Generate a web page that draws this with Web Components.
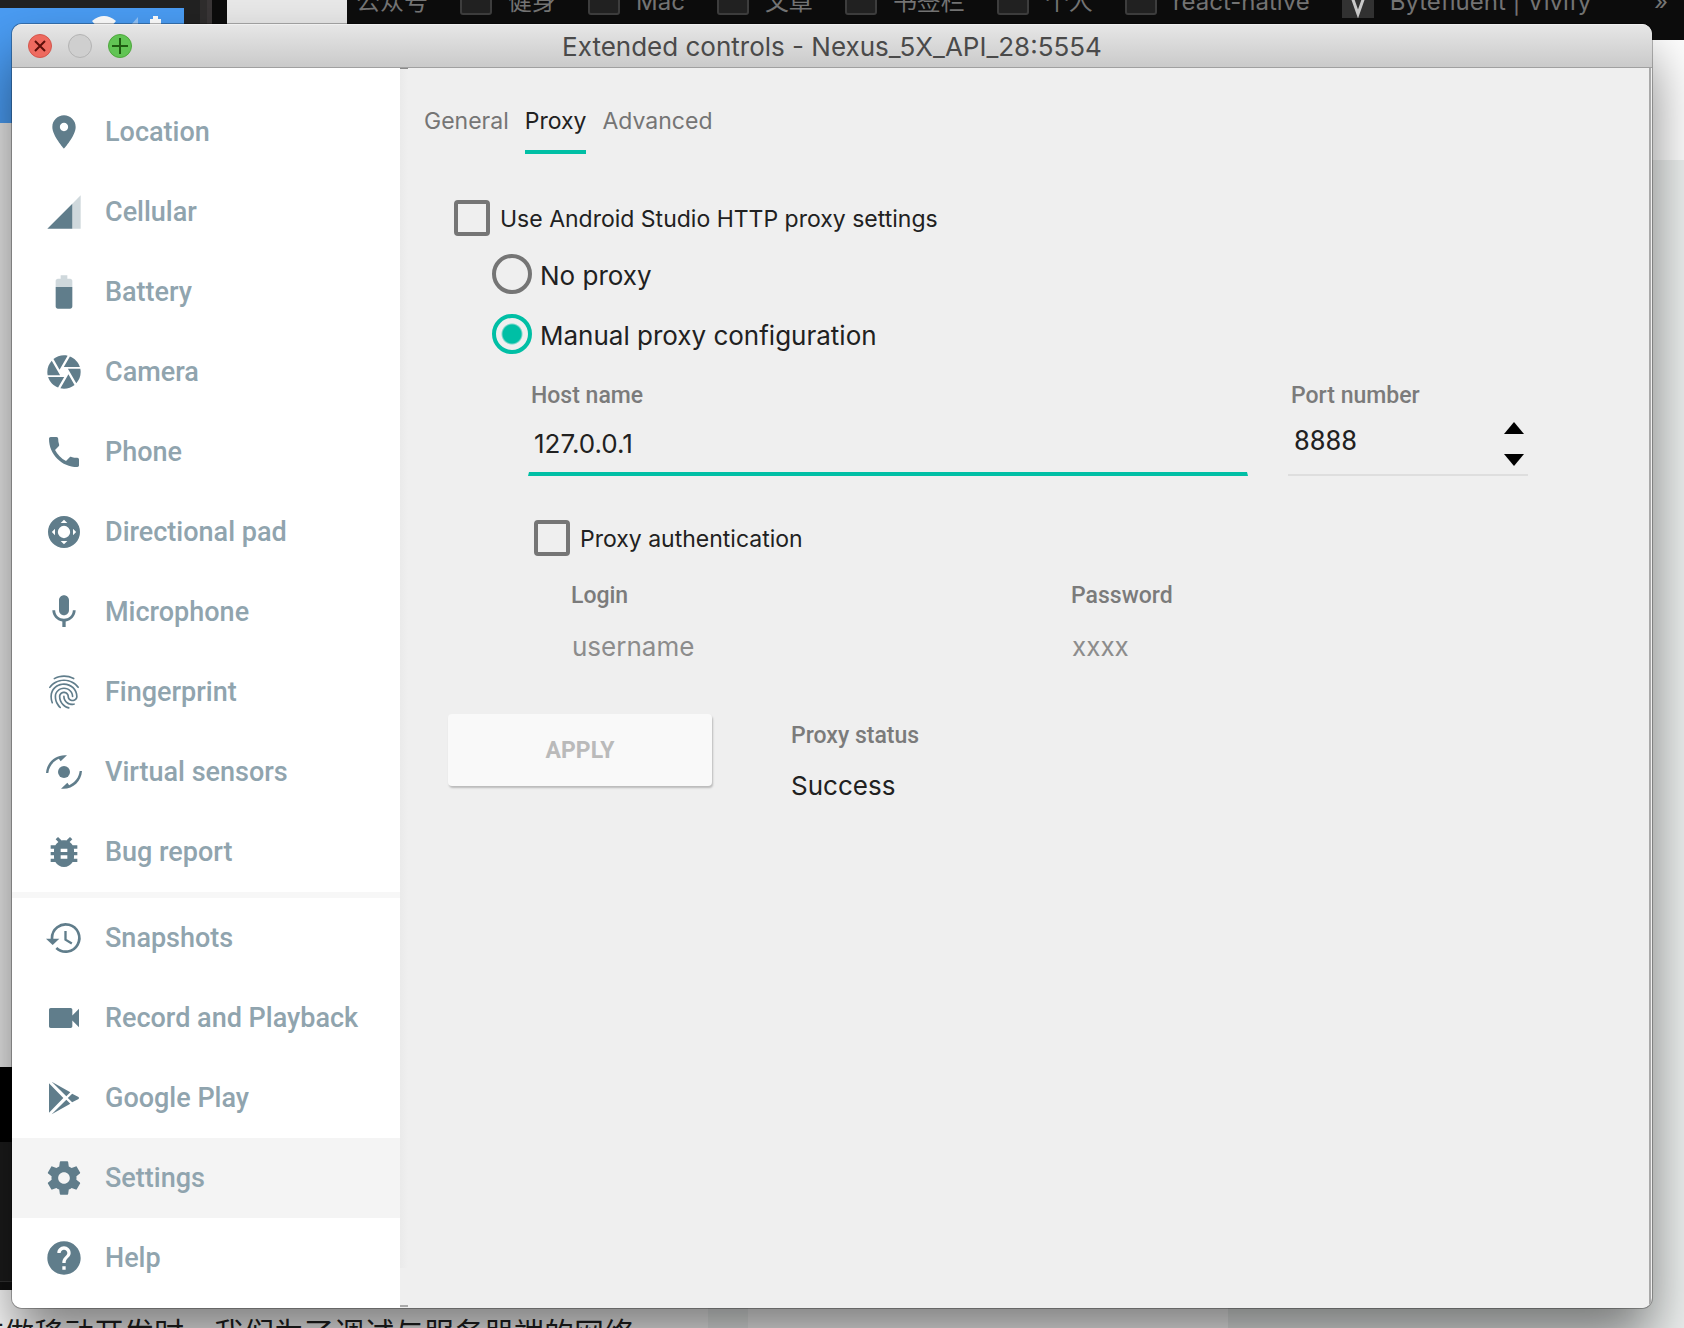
<!DOCTYPE html>
<html lang="en">
<head>
<meta charset="utf-8">
<title>Extended controls</title>
<style>
  html, body { margin: 0; height: 100%; }
  body { overflow: hidden; font-family: Inter, "Noto Sans CJK SC", sans-serif; color: #212121; }
</style>
</head>
<body>
<desktop-view>
  <browser-backdrop slot="back"></browser-backdrop>
  <phone-backdrop slot="back"></phone-backdrop>
  <app-window heading="Extended controls - Nexus_5X_API_28:5554">
    <side-bar slot="side">
      <side-item icon="location">Location</side-item>
      <side-item icon="cellular">Cellular</side-item>
      <side-item icon="battery">Battery</side-item>
      <side-item icon="camera">Camera</side-item>
      <side-item icon="phone">Phone</side-item>
      <side-item icon="dpad">Directional pad</side-item>
      <side-item icon="mic">Microphone</side-item>
      <side-item icon="finger">Fingerprint</side-item>
      <side-item icon="sensors">Virtual sensors</side-item>
      <side-item icon="bug">Bug report</side-item>
      <side-item icon="history" divided>Snapshots</side-item>
      <side-item icon="video">Record and Playback</side-item>
      <side-item icon="play">Google Play</side-item>
      <side-item icon="gear" selected>Settings</side-item>
      <side-item icon="help">Help</side-item>
    </side-bar>
    <tab-strip></tab-strip>
    <proxy-form></proxy-form>
  </app-window>
</desktop-view>

<script>
const define = (name, html, setup) => {
  const tpl = document.createElement('template');
  tpl.innerHTML = html;
  customElements.define(name, class extends HTMLElement {
    constructor() {
      super();
      this.attachShadow({ mode: 'open' }).append(tpl.content.cloneNode(true));
    }
    connectedCallback() { if (setup) setup(this, this.shadowRoot); }
  });
};

const ICONS = {
  location: '<path d="M12 2C8.13 2 5 5.13 5 9c0 5.25 7 13 7 13s7-7.75 7-13c0-3.87-3.13-7-7-7zm0 9.5c-1.38 0-2.5-1.12-2.5-2.5s1.12-2.5 2.5-2.5 2.5 1.12 2.5 2.5-1.12 2.5-2.5 2.5z"/>',
  cellular: '<path opacity=".3" d="M17 7l5-5v20h-5z"/><path d="M17 7L2 22h15z"/>',
  battery: '<path opacity=".3" d="M17 5.33C17 4.6 16.4 4 15.67 4H14V2h-4v2H8.33C7.6 4 7 4.6 7 5.33V9h10V5.33z"/><path d="M7 9v11.67C7 21.4 7.6 22 8.33 22h7.33c.74 0 1.34-.6 1.34-1.33V9H7z"/>',
  camera: '<path d="M9.4 10.5l4.77-8.26C13.47 2.09 12.75 2 12 2c-2.4 0-4.6.85-6.32 2.25l3.66 6.35.06-.1zM21.54 9c-.92-2.92-3.15-5.26-6-6.34L11.88 9h9.66zm.26 1h-7.49l.29.5 4.76 8.25C21 16.97 22 14.61 22 12c0-.69-.07-1.35-.2-2zM8.54 12l-3.9-6.75C3.01 7.03 2 9.39 2 12c0 .69.07 1.35.2 2h7.49l-1.15-2zm-6.08 3c.92 2.92 3.15 5.26 6 6.34L12.12 15H2.46zm11.27 0l-3.9 6.76c.7.15 1.42.24 2.17.24 2.4 0 4.6-.85 6.32-2.25l-3.66-6.35-.93 1.6z"/>',
  phone: '<path d="M6.62 10.79c1.44 2.83 3.76 5.14 6.59 6.59l2.2-2.2c.27-.27.67-.36 1.02-.24 1.12.37 2.33.57 3.57.57.55 0 1 .45 1 1V20c0 .55-.45 1-1 1-9.39 0-17-7.61-17-17 0-.55.45-1 1-1h3.5c.55 0 1 .45 1 1 0 1.25.2 2.45.57 3.57.11.35.03.74-.25 1.02l-2.2 2.2z"/>',
  dpad: '<path fill-rule="evenodd" d="M12 2.4a9.6 9.6 0 1 0 0 19.2 9.6 9.6 0 0 0 0-19.2zM12 8.3a3.7 3.7 0 1 1 0 7.4 3.7 3.7 0 0 1 0-7.4zM12 4.7l2 1.9h-4zM12 19.3l2-1.9h-4zM4.7 12l1.9-2v4zM19.3 12l-1.9-2v4z"/>',
  mic: '<path d="M12 14c1.66 0 2.99-1.34 2.99-3L15 5c0-1.66-1.34-3-3-3S9 3.34 9 5v6c0 1.66 1.34 3 3 3zm5.3-3c0 3-2.54 5.1-5.3 5.1S6.7 14 6.7 11H5c0 3.41 2.72 6.23 6 6.72V21h2v-3.28c3.28-.48 6-3.3 6-6.72h-1.7z"/>',
  finger: '<path d="M17.81 4.47c-.08 0-.16-.02-.23-.06C15.66 3.42 14 3 12.01 3c-1.98 0-3.86.47-5.57 1.41-.24.13-.54.04-.68-.2-.13-.24-.04-.55.2-.68C7.82 2.52 9.86 2 12.01 2c2.13 0 3.99.47 6.03 1.52.25.13.34.43.21.67-.09.18-.26.28-.44.28zM3.5 9.72c-.1 0-.2-.03-.29-.09-.23-.16-.28-.47-.12-.7.99-1.4 2.25-2.5 3.75-3.27C9.98 4.04 14 4.03 17.15 5.65c1.5.77 2.76 1.86 3.75 3.25.16.22.11.54-.12.7-.23.16-.54.11-.7-.12-.9-1.26-2.04-2.25-3.39-2.94-2.87-1.47-6.54-1.47-9.4.01-1.36.7-2.5 1.7-3.4 2.96-.08.14-.23.21-.39.21zm6.25 12.07c-.13 0-.26-.05-.35-.15-.87-.87-1.34-1.43-2.01-2.64-.69-1.23-1.05-2.73-1.05-4.34 0-2.97 2.54-5.39 5.66-5.39s5.66 2.42 5.66 5.39c0 .28-.22.5-.5.5s-.5-.22-.5-.5c0-2.42-2.09-4.39-4.66-4.39-2.57 0-4.66 1.97-4.66 4.39 0 1.44.32 2.77.93 3.85.64 1.15 1.08 1.64 1.85 2.42.19.2.19.51 0 .71-.11.1-.24.15-.37.15zm7.17-1.85c-1.19 0-2.24-.3-3.1-.89-1.49-1.01-2.38-2.65-2.38-4.39 0-.28.22-.5.5-.5s.5.22.5.5c0 1.41.72 2.74 1.94 3.56.71.48 1.54.71 2.54.71.24 0 .64-.03 1.04-.1.27-.05.53.13.58.41.05.27-.13.53-.41.58-.57.11-1.07.12-1.21.12zM14.91 22c-.04 0-.09-.01-.13-.02-1.59-.44-2.63-1.03-3.72-2.1-1.4-1.39-2.17-3.24-2.17-5.22 0-1.62 1.38-2.94 3.08-2.94 1.7 0 3.08 1.32 3.08 2.94 0 1.07.93 1.94 2.08 1.94s2.08-.87 2.08-1.94c0-3.77-3.25-6.83-7.25-6.83-2.84 0-5.44 1.58-6.61 4.03-.39.81-.59 1.76-.59 2.8 0 .78.07 2.01.67 3.61.1.26-.03.55-.29.64-.26.1-.55-.04-.64-.29-.49-1.31-.73-2.61-.73-3.96 0-1.2.23-2.29.68-3.24 1.33-2.79 4.28-4.6 7.51-4.6 4.55 0 8.25 3.51 8.25 7.83 0 1.62-1.38 2.94-3.08 2.94s-3.08-1.32-3.08-2.94c0-1.07-.93-1.94-2.08-1.94s-2.08.87-2.08 1.94c0 1.71.66 3.31 1.87 4.51.95.94 1.86 1.46 3.27 1.85.27.07.42.35.35.61-.05.23-.26.38-.47.38z"/>',
  sensors: '<circle cx="12" cy="12" r="3.6"/><path d="M1.2 12.6C1.6 6.6 6.3 1.9 12.4 1.9l1.4.1-3.8 3.5-1.1-1.4C5.5 5.6 3 8.7 2.6 12.6z"/><path transform="rotate(180 12 12)" d="M1.2 12.6C1.6 6.6 6.3 1.9 12.4 1.9l1.4.1-3.8 3.5-1.1-1.4C5.5 5.6 3 8.7 2.6 12.6z"/>',
  bug: '<path d="M20 8h-2.81c-.45-.78-1.07-1.45-1.82-1.96L17 4.41 15.59 3l-2.17 2.17C12.96 5.06 12.49 5 12 5c-.49 0-.96.06-1.41.17L8.41 3 7 4.41l1.62 1.63C7.88 6.55 7.26 7.22 6.81 8H4v2h2.09c-.05.33-.09.66-.09 1v1H4v2h2v1c0 .34.04.67.09 1H4v2h2.81c1.04 1.79 2.97 3 5.19 3s4.15-1.21 5.19-3H20v-2h-2.09c.05-.33.09-.66.09-1v-1h2v-2h-2v-1c0-.34-.04-.67-.09-1H20V8zm-6 8h-4v-2h4v2zm0-4h-4v-2h4v2z"/>',
  history: '<path d="M1.2 12.4h8L5.2 16.2z"/><path fill="none" stroke="#607d8b" stroke-width="1.6" d="M4.8 12.6V12a8.2 8.2 0 1 1 2.6 6"/><path fill="none" stroke="#607d8b" stroke-width="1.4" d="M12.9 7.8v5.2l3.8 2.3"/>',
  video: '<path d="M17 10.5V7c0-.55-.45-1-1-1H4c-.55 0-1 .45-1 1v10c0 .55.45 1 1 1h12c.55 0 1-.45 1-1v-3.5l4 4v-11l-4 4z"/>',
  play: '<path d="M3 3.2L11.6 12 3 20.8zM4.6 2.2l11.2 6.3-2.4 2.4zM4.6 21.8l11.2-6.3-2.4-2.4zM14.3 12l2.6-2.6L20.7 11.4q.7.6 0 1.2L16.9 14.6z"/>',
  gear: '<path d="M19.43 12.98c.04-.32.07-.64.07-.98s-.03-.66-.07-.98l2.11-1.65c.19-.15.24-.42.12-.64l-2-3.46c-.12-.22-.39-.3-.61-.22l-2.49 1c-.52-.4-1.08-.73-1.69-.98l-.38-2.65C14.46 2.18 14.25 2 14 2h-4c-.25 0-.46.18-.49.42l-.38 2.65c-.61.25-1.17.59-1.69.98l-2.49-1c-.23-.09-.49 0-.61.22l-2 3.46c-.13.22-.07.49.12.64l2.11 1.65c-.04.32-.07.65-.07.98s.03.66.07.98l-2.11 1.65c-.19.15-.24.42-.12.64l2 3.46c.12.22.39.3.61.22l2.49-1c.52.4 1.08.73 1.69.98l.38 2.65c.03.24.24.42.49.42h4c.25 0 .46-.18.49-.42l.38-2.65c.61-.25 1.17-.59 1.69-.98l2.49 1c.23.09.49 0 .61-.22l2-3.46c.12-.22.07-.49-.12-.64l-2.11-1.65zM12 15.5c-1.93 0-3.5-1.57-3.5-3.5s1.57-3.5 3.5-3.5 3.5 1.57 3.5 3.5-1.57 3.5-3.5 3.5z"/>',
  help: '<path d="M12 2C6.48 2 2 6.48 2 12s4.48 10 10 10 10-4.48 10-10S17.52 2 12 2zm1 17h-2v-2h2v2zm2.07-7.75l-.9.92C13.45 12.9 13 13.5 13 15h-2v-.5c0-1.1.45-2.1 1.17-2.83l1.24-1.26c.37-.36.59-.86.59-1.41 0-1.1-.9-2-2-2s-2 .9-2 2H8c0-2.21 1.79-4 4-4s4 1.79 4 4c0 .88-.36 1.68-.93 2.25z"/>'
};

define('desktop-view', `
<style>
  :host { display: block; position: relative; min-height: 100vh; box-sizing: border-box; padding: 24px 32px 20px 12px; overflow: hidden; background: #e9e9e9; }
</style>
<slot name="back"></slot>
<slot></slot>`);

define('browser-backdrop', `
<style>
  :host { position: absolute; inset: 0; display: flex; flex-direction: column; }
  .bar { height: 40px; margin-left: 347px; background: #0d0d0d; overflow: hidden; }
  ul { display: flex; align-items: center; height: 56px; margin: -26px 0 0; padding: 0 16px 0 9px; list-style: none; color: #757575; font-size: 24px; line-height: 28px; white-space: nowrap; }
  li { display: flex; align-items: center; gap: 16px; margin-right: 32px; }
  li i { width: 28px; height: 26px; border: 2px solid #3e3e3e; border-radius: 3px; background: #222; margin-bottom: 4px; }
  li svg { width: 32px; height: 32px; }
  li:last-child { margin: 0 0 0 auto; }
  .page { flex: 1; display: grid; grid-template-columns: 708px 40px 480px 1fr; background: #fff; }
  .side { background: #eef1f0; margin-top: 120px; }
  .gap { background: #f2f5f4; }
  p { align-self: end; margin: 0; height: 13px; overflow: hidden; font-size: 30px; line-height: 36px; white-space: nowrap; text-indent: -26px; color: #222; }
</style>
<div class="bar"><ul>
  <li>公众号</li><li><i></i>健身</li><li><i></i>Mac</li><li><i></i>文章</li><li><i></i>书签栏</li><li><i></i>个人</li><li><i></i>react-native</li>
  <li><svg viewBox="0 0 32 32" aria-hidden="true"><path fill="#333" d="M0 0h32v32H0z"/><path fill="none" stroke="#ccc" stroke-width="3" d="M9 8l7 20 7-20"/></svg>Bytefluent | Vivify</li>
  <li>»</li>
</ul></div>
<div class="page"><p>在做移动开发时，我们为了调试与服务器端的网络</p><div class="gap"></div><div></div><div class="side"></div></div>`);

define('phone-backdrop', `
<style>
  :host { position: absolute; left: 0; top: 0; width: 347px; display: flex; flex-direction: column; }
  .top { display: flex; height: 123px; background: #e9e9e9; }
  .frame { width: 227px; background: linear-gradient(90deg, #222 200px, #2f2d2d 200px, #2f2d2d 207px, #3a3637 207px, #3a3637 212px, #0c0c0c 212px); }
  .status { width: 184px; height: 115px; margin-top: 8px; background: #4a9cf3; }
  svg { display: block; width: 184px; height: 24px; }
  .strip { width: 12px; }
  .light { height: 944px; background: #ececec; }
  .black { height: 75px; background: #000; }
  .dark { height: 139px; background: #1b1b1b; }
  .edge { height: 8px; background: #111; border-top: 1px solid #333; }
</style>
<div class="top"><div class="frame"><div class="status"><svg viewBox="0 0 184 24" aria-hidden="true"><path fill="#fff" d="M92 13q12-10 24 0l-12 14z"/><path fill="#fff" opacity=".4" d="M138 9v15h-8v-6z"/><path fill="#fff" d="M150 11h3V8h5v3h3v13h-11z"/></svg></div></div></div>
<div class="strip light"></div><div class="strip black"></div><div class="strip dark"></div><div class="strip edge"></div>`);

define('app-window', `
<style>
  :host { display: flex; flex-direction: column; position: relative; border-radius: 10px; overflow: hidden; background: #efefef; box-shadow: 0 0 0 1px rgba(0,0,0,.28), 0 32px 56px rgba(0,0,0,.5); min-height: calc(100vh - 44px); box-sizing: border-box; }
  header { display: grid; grid-template-columns: 1fr auto 1fr; align-items: center; box-sizing: border-box; height: 44px; padding: 0 16px; background: linear-gradient(#e6e6e6, #cacaca); border-bottom: 1px solid #a0a0a0; border-top: 1px solid #f0f0f0; }
  .lights { display: flex; gap: 16px; }
  button { width: 24px; height: 24px; padding: 0; border: 1px solid #b3b3b3; border-radius: 50%; background: #cfcfcf; }
  .close { background: #ee6a5f; border-color: #d3564d; }
  .zoom { background: #61c454; border-color: #4fa73d; }
  svg { display: block; width: 22px; height: 22px; fill: none; stroke-width: 2; }
  h1 { margin: 0; padding-top: 2px; font-size: 26px; line-height: 32px; font-weight: 400; color: #4a4a4a; white-space: nowrap; }
  .body { flex: 1; display: flex; }
  main { flex: 1; min-width: 0; border-right: 2px solid #a9a9a9; margin-right: 1px; padding-left: 24px; background:
    linear-gradient(#a9a9a9, #a9a9a9) 0 calc(100% - 1px) / 8px 2px no-repeat,
    linear-gradient(#8a8a8a, #8a8a8a) 0 0 / 8px 1px no-repeat,
    linear-gradient(90deg, #eaeaea, #efefef) 0 0 / 8px calc(100% - 40px) no-repeat, #efefef; }
</style>
<header>
  <div class="lights">
    <button class="close" aria-label="Close"><svg viewBox="0 0 22 22" stroke="#5c0f0a"><path d="M6 6l10 10M16 6L6 16"/></svg></button>
    <button aria-label="Minimize"></button>
    <button class="zoom" aria-label="Zoom"><svg viewBox="0 0 22 22" stroke="#1f5c12"><path d="M11 3v16M3 11h16"/></svg></button>
  </div>
  <h1></h1>
</header>
<div class="body"><slot name="side"></slot><main><slot></slot></main></div>`,
(el, root) => { root.querySelector('h1').textContent = el.getAttribute('heading'); });

define('side-bar', `
<style>
  :host { display: block; width: 388px; flex: none; box-sizing: border-box; padding: 24px 0 10px; background: #fff; }
  nav { display: flex; flex-direction: column; }
</style>
<nav><slot></slot></nav>`);

define('side-item', `
<style>
  :host { display: block; }
  :host([divided]) { border-top: 6px solid #f7f7f7; }
  :host([selected]) { background: #f4f4f4; }
  a { display: flex; align-items: center; gap: 21px; height: 80px; padding-left: 32px; color: #90a4ae; text-decoration: none; font: 500 27px/32px Roboto, sans-serif; white-space: nowrap; }
  svg { width: 40px; height: 40px; fill: #607d8b; }
</style>
<a><svg viewBox="0 0 24 24" aria-hidden="true"></svg><span><slot></slot></span></a>`,
(el, root) => {
  const name = el.getAttribute('icon');
  root.querySelector('svg').innerHTML = ICONS[name];
  root.querySelector('a').href = '#' + name;
});

define('tab-strip', `
<style>
  :host { display: block; }
  div { display: flex; gap: 16px; }
  button { padding: 40px 0 16px; border: 0; border-bottom: 4px solid transparent; background: none; font: 23px/26px Inter, sans-serif; color: #757575; }
  [aria-selected=true] { color: #212121; border-color: #00bfa5; }
</style>
<div role="tablist"><button role="tab">General</button><button role="tab" aria-selected="true">Proxy</button><button role="tab">Advanced</button></div>`);

define('check-option', `
<style>
  :host { display: flex; }
  label { display: flex; align-items: center; gap: 10px; font-size: 23px; line-height: 26px; }
  span { padding-top: 1px; }
  input { appearance: none; box-sizing: border-box; width: 36px; height: 36px; margin: 0; border: 4px solid #757575; border-radius: 4px; }
</style>
<label><input type="checkbox"><span><slot></slot></span></label>`);

define('proxy-mode', `
<style>
  :host { display: flex; flex-direction: column; gap: 20px; align-items: flex-start; }
  label { display: flex; align-items: center; gap: 8px; height: 40px; font-size: 26px; line-height: 32px; }
  span { padding-top: 4px; }
  input { appearance: none; box-sizing: border-box; width: 40px; height: 40px; margin: 0; border: 4px solid #757575; border-radius: 50%; }
  input:checked { border-color: #00bfa5; background: radial-gradient(circle, #00bfa5 9px, transparent 11px); }
</style>
<label><input type="radio" name="mode"><span>No proxy</span></label>
<label><input type="radio" name="mode" checked><span>Manual proxy configuration</span></label>`);

define('text-field', `
<style>
  :host { display: flex; flex-direction: column; min-width: 0; }
  label { padding: 0 3px; font: 500 23px/28px Roboto, sans-serif; color: #7b7b7b; }
  input { box-sizing: border-box; width: 100%; height: 66px; margin: 0; padding: 6px 4px 0; border: 0; outline: 0; border-radius: 0; background: none; font: 26px Inter, sans-serif; color: #212121; }
  :host([active]) input { padding: 4px 5px 0; border: 0 solid transparent; border-width: 0 1px 4px; border-bottom-color: #00bfa5; }
  input::placeholder { color: #8c8c8c; opacity: 1; }
</style>
<label for="field"></label><input id="field">`,
(el, root) => {
  const input = root.querySelector('input');
  root.querySelector('label').textContent = el.getAttribute('label');
  input.type = el.getAttribute('type') || 'text';
  input.value = el.getAttribute('value') || '';
  input.placeholder = el.getAttribute('placeholder') || '';
});

define('number-field', `
<style>
  :host { display: flex; flex-direction: column; }
  label { padding: 0 3px; font: 500 23px/28px Roboto, sans-serif; color: #7b7b7b; }
  .row { display: flex; box-sizing: border-box; height: 66px; border-bottom: 2px solid #dedede; padding-right: 4px; }
  input { flex: 1; min-width: 0; margin: 0; padding: 0 6px 4px; border: 0; outline: 0; background: none; font: 28px Roboto, sans-serif; color: #212121; }
  .steps { display: flex; flex-direction: column; justify-content: center; gap: 20px; padding-top: 4px; }
  button { width: 20px; height: 12px; padding: 0; border: 0; background: #000; clip-path: polygon(50% 0, 100% 100%, 0 100%); }
  button + button { clip-path: polygon(0 0, 100% 0, 50% 100%); }
</style>
<label for="field">Port number</label>
<div class="row"><input id="field" inputmode="numeric" value="8888"><div class="steps"><button aria-label="Increase"></button><button aria-label="Decrease"></button></div></div>`);

define('proxy-form', `
<style>
  :host { display: block; padding: 46px 121px 0 30px; }
  form { display: flex; flex-direction: column; }
  proxy-mode { margin: 18px 0 28px 38px; }
  .server { display: flex; gap: 40px; margin-left: 74px; }
  .server text-field { flex: 1; }
  .server number-field { width: 240px; }
  .auth { margin: 44px 0 26px 80px; }
  .login { display: grid; grid-template-columns: 1fr 1fr; gap: 40px; margin-left: 114px; }
  .foot { display: flex; align-items: flex-start; gap: 79px; margin: 38px 0 0 -6px; }
  button { width: 264px; height: 72px; border: 0; border-radius: 4px; background: #f9f9f9; box-shadow: 1px 2px 2px rgba(0,0,0,.22); font: 700 23px Roboto, sans-serif; color: #bababa; }
  .status { display: flex; flex-direction: column; gap: 20px; padding-top: 8px; }
  .status label { font: 500 23px/28px Roboto, sans-serif; color: #7b7b7b; }
  output { font-size: 26px; line-height: 32px; }
</style>
<form>
  <check-option>Use Android Studio HTTP proxy settings</check-option>
  <proxy-mode></proxy-mode>
  <div class="server"><text-field active label="Host name" value="127.0.0.1"></text-field><number-field></number-field></div>
  <check-option class="auth">Proxy authentication</check-option>
  <div class="login"><text-field label="Login" placeholder="username"></text-field><text-field label="Password" type="password" placeholder="xxxx"></text-field></div>
  <div class="foot"><button type="button" disabled>APPLY</button><div class="status"><label for="state">Proxy status</label><output id="state">Success</output></div></div>
</form>`);
</script>
</body>
</html>
